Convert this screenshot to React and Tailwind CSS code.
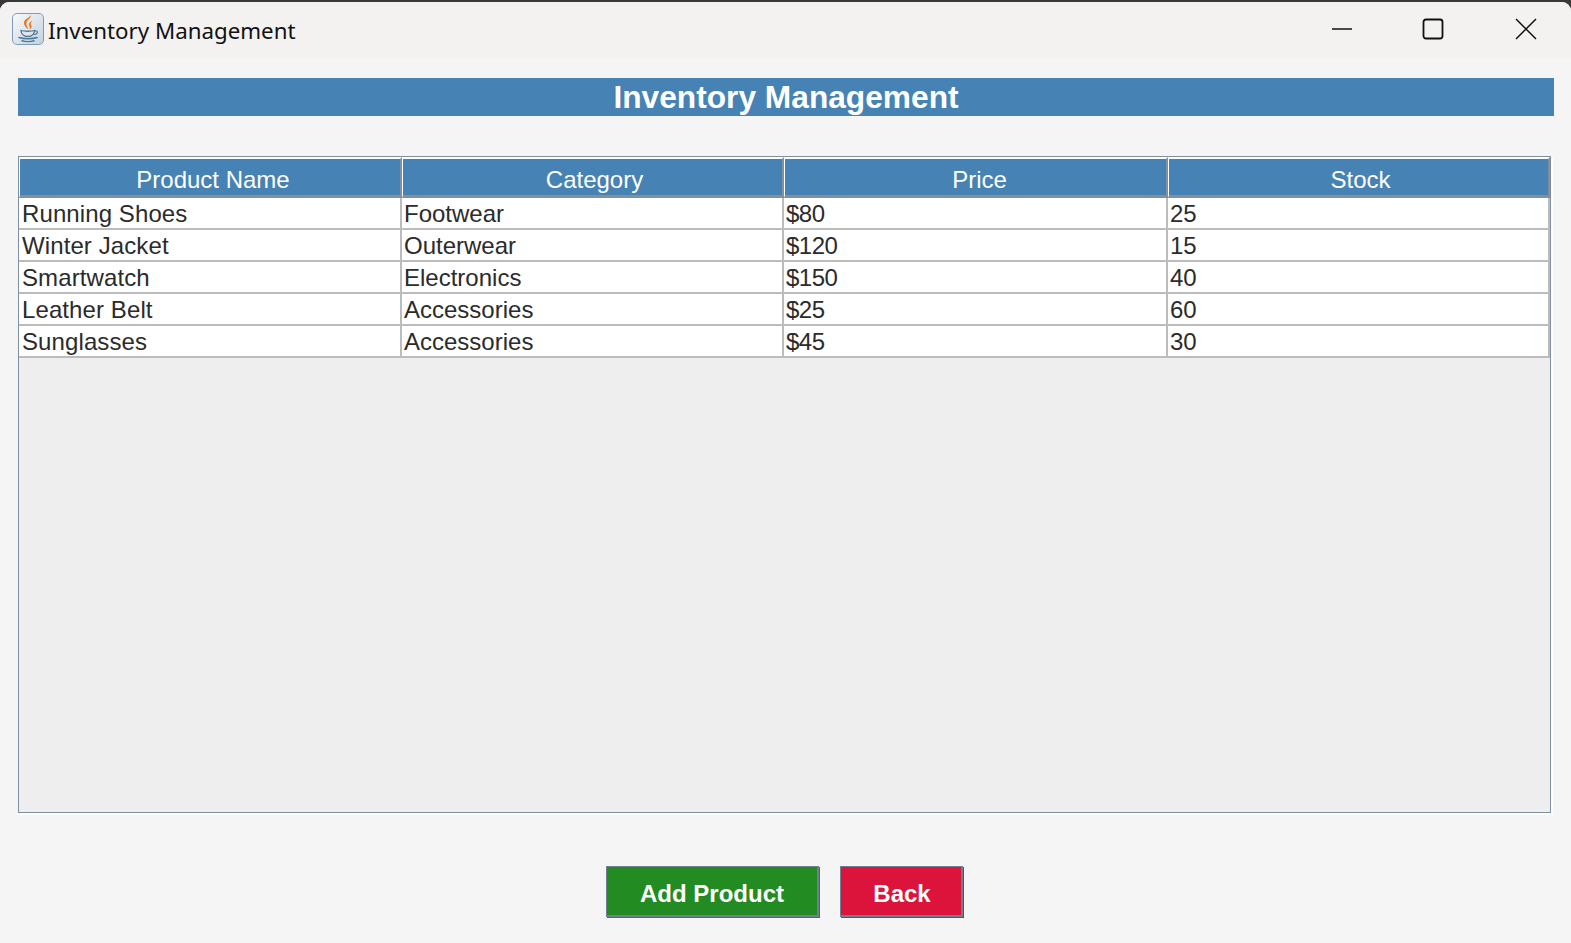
import React from "react";

const columns = ["Product Name", "Category", "Price", "Stock"];

const products = [
  ["Running Shoes", "Footwear", "$80", "25"],
  ["Winter Jacket", "Outerwear", "$120", "15"],
  ["Smartwatch", "Electronics", "$150", "40"],
  ["Leather Belt", "Accessories", "$25", "60"],
  ["Sunglasses", "Accessories", "$45", "30"],
];

// small per column nudges, the original is drawn by Swing with hinted advances
const headerStyles = ["pl-[6px]", "pl-[4px]", "pl-[8px]", "pl-[4px]"];
const cellStyles = [
  "pl-[3px] tracking-[0.1px]",
  "pl-[2px]",
  "pl-[2px] tracking-[-0.5px]",
  "pl-[2px]",
];

function JavaIcon() {
  return (
    <div className="w-[32px] h-[32px] mb-[2px] rounded-[5px] border border-[#7f9db9] bg-gradient-to-br from-[#f8f9fb] to-[#c3d2df] flex items-center justify-center">
      <svg width="28" height="30" viewBox="0 0 28 30" fill="none">
        <path d="M16.500 1c1.500 3.500-5.500 5.500-4 10 .5 1.500 1.500 2.500 1.500 4-2-1.500-4.500-4-4-7C10.500 5 15.500 4 16.500 1z" fill="#ea7a1e" />
        <path d="M18.500 6.500c-3.500 1.500-4.500 3.500-3 6 .7 1.200.5 2-.2 3 2.200-1 3-2.500 1.800-4.500-.9-1.500-.1-3 1.400-4.500z" fill="#ea7a1e" />
        <path d="M7 16.500c2.500 1 11 1 13.500 0-.3 4-2.500 6-6.700 6S7.300 20.500 7 16.500z" fill="#dfe7ee" stroke="#4f7896" strokeWidth="1.300" />
        <path d="M20.500 17c2-.5 3.300.3 2.800 1.700-.4 1.100-2.300 1.700-3.800 1.900" stroke="#4f7896" strokeWidth="1.200" />
        <path d="M5 23.500c4 1.500 14 1.500 18 0M8 26.800c3 1 9 1 12 0" stroke="#4f7896" strokeWidth="1.500" strokeLinecap="round" />
      </svg>
    </div>
  );
}

function TitleBar() {
  return (
    <div className="h-[56px] shrink-0 flex items-center bg-[#f3f2f1] pl-[12px]">
      <JavaIcon />
      <span className="ml-[4px] pt-[2px] text-[22.300px] leading-none text-[#111111] font-['Noto_Sans',sans-serif]">
        Inventory Management
      </span>
      <div className="ml-auto flex items-center h-full pb-[2px]">
        <svg width="22" height="22" viewBox="0 0 22 22" className="mr-[69px]">
          <path d="M1 11h20" stroke="#111111" strokeWidth="1.500" />
        </svg>
        <svg width="22" height="22" viewBox="0 0 22 22" className="mr-[71px]">
          <rect x="1.500" y="1.500" width="19" height="19" rx="2.500" fill="none" stroke="#111111" strokeWidth="1.800" />
        </svg>
        <svg width="22" height="22" viewBox="0 0 22 22" className="mr-[34px]">
          <path d="M1 1l20 20M21 1L1 21" stroke="#111111" strokeWidth="1.500" />
        </svg>
      </div>
    </div>
  );
}

function ProductTable() {
  return (
    <div className="mt-[40px] w-[1533px] h-[657px] border border-[#7d8fa3] bg-[#eeeeee] shadow-[2px_2px_0_#ffffff] shrink-0">
      <table className="table-fixed w-[1531px] border-separate border-spacing-0 text-[24px] font-['Liberation_Sans',sans-serif]">
        <colgroup>
          <col className="w-[383px]" />
          <col className="w-[382px]" />
          <col className="w-[384px]" />
          <col className="w-[382px]" />
        </colgroup>
        <thead>
          <tr className="h-[41px]">
            {columns.map((col, i) => (
              <th
                key={col}
                className={`bg-[#4682b4] text-white font-normal leading-none text-center p-0 pt-[6px] border-t-2 border-l border-t-white border-l-white border-b-[3px] border-r-2 border-b-[#80909f] border-r-[#80909f] ${headerStyles[i]}`}
              >
                {col}
              </th>
            ))}
          </tr>
        </thead>
        <tbody>
          {products.map((row) => (
            <tr key={row[0]} className="h-[32px] bg-white">
              {row.map((cell, i) => (
                <td
                  key={i}
                  className={`p-0 pt-[2px] leading-none text-[#2b2b2b] border-b-2 border-r-2 border-[#bcbcbc] ${cellStyles[i]}`}
                >
                  {cell}
                </td>
              ))}
            </tr>
          ))}
        </tbody>
      </table>
    </div>
  );
}

export default function App() {
  return (
    <div className="w-[1571px] h-[943px] bg-[#383838] pt-[2px] overflow-hidden">
      <div className="h-[941px] bg-[#f5f5f5] rounded-t-[9px] overflow-hidden flex flex-col">
        <TitleBar />
        <main className="flex-1 flex flex-col px-[18px] pt-[20px]">
          <h1 className="w-[1536px] h-[38px] bg-[#4682b4] text-white text-center text-[31.700px] leading-[38px] font-bold font-['Liberation_Sans',sans-serif]">
            Inventory Management
          </h1>
          <ProductTable />
          <div className="mt-[53px] pr-[2px] flex justify-center gap-[21px] font-['Liberation_Sans',sans-serif]">
            <button className="w-[213px] h-[51px] pt-[5px] bg-[#228b22] text-white text-[24px] leading-none font-bold border-t border-l border-r-2 border-b-2 border-[#708090] shadow-[1px_1px_0_#228b22]">
              Add Product
            </button>
            <button className="w-[123px] h-[51px] pt-[5px] pl-[2px] bg-[#dc143c] text-white text-[24px] leading-none font-bold border-t border-l border-r-2 border-b-2 border-[#708090] shadow-[1px_1px_0_#dc143c]">
              Back
            </button>
          </div>
        </main>
      </div>
    </div>
  );
}
